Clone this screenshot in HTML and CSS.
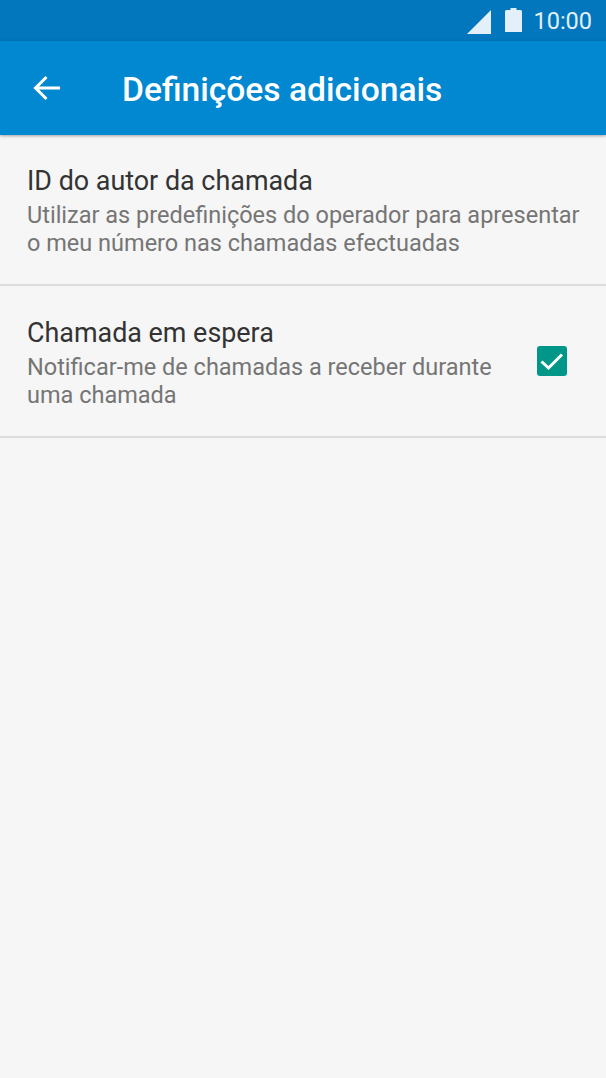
FILE: index.html
```html
<!DOCTYPE html>
<html lang="pt">
<head>
  <meta charset="UTF-8" />
  <meta name="viewport" content="width=device-width, initial-scale=1" />
  <title>Definições adicionais</title>
  <link rel="stylesheet" href="styles.css">
</head>
<body>

  <div class="status-bar">
    <svg class="signal" width="24" height="24" viewBox="0 0 24 24"><path d="M0 24 L24 0 V24 Z" fill="#e3f0f9"/></svg>
    <svg class="battery" width="17" height="24" viewBox="0 0 17 24"><path d="M5.5 0 H11.5 V2 H15.5 Q17 2 17 3.5 V24 H0 V3.5 Q0 2 1.5 2 H5.5 Z" fill="#e3f0f9"/></svg>
    <span class="time">10:00</span>
  </div>

  <header class="app-bar">
    <svg class="back" width="28" height="26" viewBox="0 0 28 26"><path d="M27 13 H3 M13.5 2 L2.5 13 L13.5 24" fill="none" stroke="#fff" stroke-width="3"/></svg>
    <h1>Definições adicionais</h1>
  </header>

  <div class="setting">
    <div class="setting-text">
      <h2>ID do autor da chamada</h2>
      <p>Utilizar as predefinições do operador para apresentar o meu número nas chamadas efectuadas</p>
    </div>
  </div>

  <div class="setting setting-tall">
    <div class="setting-text">
      <h2>Chamada em espera</h2>
      <p>Notificar-me de chamadas a receber durante uma chamada</p>
    </div>
    <div class="checkbox">
      <svg width="30" height="30" viewBox="0 0 30 30"><path d="M4.5 15.5 L11.5 22 L25 8.5" fill="none" stroke="#fff" stroke-width="3"/></svg>
    </div>
  </div>

</body>
</html>
```

FILE: styles.css
```css
* {
  margin: 0;
  padding: 0;
  box-sizing: border-box;
}
body {
  font-family: Roboto, sans-serif;
  background: #f6f6f6;
  color: #333;
  height: 1078px;
  overflow: hidden;
}
.status-bar {
  height: 41px;
  background: #0277bd;
  display: flex;
  align-items: center;
  justify-content: flex-end;
  padding-right: 14px;
  color: #e3f0f9;
}
.signal {
  margin-right: 14px;
  margin-top: 2px;
}
.battery {
  margin-right: 11px;
  margin-top: -2px;
}
.time {
  font-size: 23.5px;
}
.app-bar {
  height: 94px;
  background: #0288d1;
  display: flex;
  align-items: center;
  padding-left: 33px;
  box-shadow: 0 1px 3px rgba(0, 0, 0, 0.35);
  color: #fff;
  position: relative;
}
.app-bar h1 {
  font-size: 33.6px;
  font-weight: 500;
  margin-left: 61px;
  margin-top: 2px;
}
.setting {
  height: 151px;
  border-bottom: 2px solid #dcdcdc;
  display: flex;
  align-items: center;
  padding: 0 20px 0 27px;
}
.setting-tall {
  height: 152px;
}
.setting-text {
  flex: 1;
  padding-top: 2px;
}
.setting h2 {
  font-size: 26.9px;
  font-weight: 400;
  line-height: 34px;
  margin-bottom: 3px;
}
.setting p {
  font-size: 23.5px;
  line-height: 28px;
  color: #757575;
}
.checkbox {
  width: 30px;
  height: 30px;
  background: #009688;
  border-radius: 3px;
  margin-left: 10px;
  margin-right: 19px;
  flex-shrink: 0;
}
.checkbox svg {
  display: block;
}
```
